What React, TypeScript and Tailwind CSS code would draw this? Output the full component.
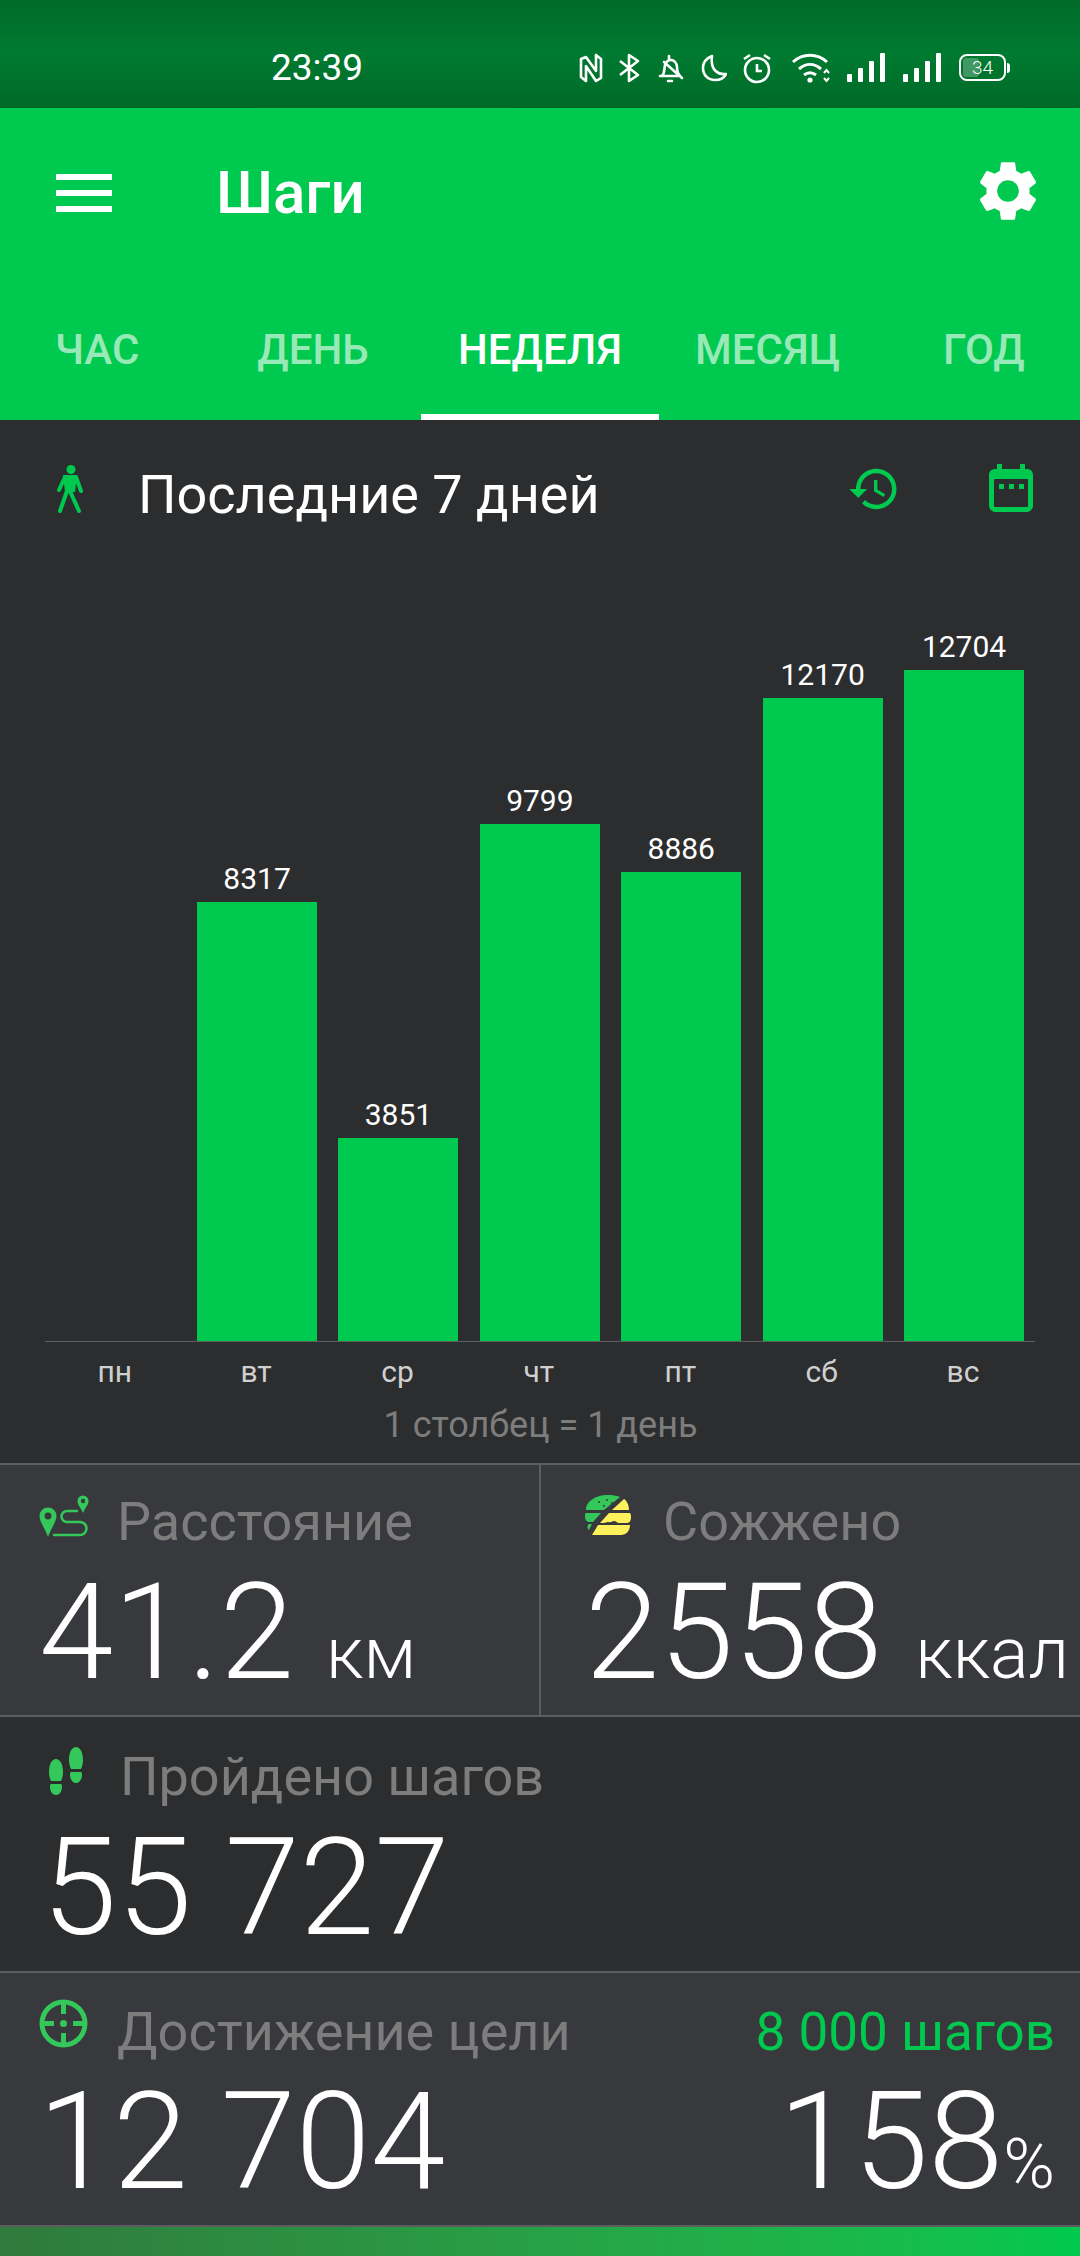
const days = [
  { day: "пн", steps: 0 },
  { day: "вт", steps: 8317 },
  { day: "ср", steps: 3851 },
  { day: "чт", steps: 9799 },
  { day: "пт", steps: 8886 },
  { day: "сб", steps: 12170 },
  { day: "вс", steps: 12704 },
];

const tabs = [
  { label: "ЧАС", className: "w-[205px] pl-[55px] text-left text-white/60" },
  { label: "ДЕНЬ", className: "w-[216px] text-center text-white/60" },
  { label: "НЕДЕЛЯ", className: "w-[238px] text-center text-white border-b-[6px] border-white" },
  { label: "МЕСЯЦ", className: "w-[217px] text-center text-white/60" },
  { label: "ГОД", className: "w-[204px] pl-[67px] text-left text-white/60" },
];

function StatusIcons() {
  return (
    <div className="flex items-center text-white">
      <svg width="24" height="30" viewBox="0 0 24 30" fill="none" stroke="currentColor" strokeWidth="2.6">
        <path d="M7 4 2 6v18l5 4V13l10 15 5-3V6l-5-4v16L7 4Z" strokeLinejoin="round" />
      </svg>
      <svg width="22" height="30" viewBox="0 0 22 30" fill="none" stroke="currentColor" strokeWidth="2.6" className="ml-[15px]">
        <path d="M2 8 20 22 11 28V2l9 6L2 22" strokeLinejoin="round" />
      </svg>
      <svg width="26" height="30" viewBox="0 0 26 30" fill="none" stroke="currentColor" strokeWidth="2.6" className="ml-[18px]">
        <path d="M2 23h18M4 23c3-3 2-7 3-11 1-3 3-5 6-5s6 3 6 7c0 3 0 6 3 9M11 3v3M10 28h4M6 9l18 16" strokeLinecap="round" />
      </svg>
      <svg width="26" height="28" viewBox="0 0 26 28" fill="none" stroke="currentColor" strokeWidth="2.6" className="ml-[17px]">
        <path d="M11 2C6 4 2 8 2 14c0 7 5 12 12 12 5 0 9-2 11-6-7 1-16-3-14-18Z" strokeLinejoin="round" />
      </svg>
      <svg width="30" height="32" viewBox="0 0 30 32" fill="none" stroke="currentColor" strokeWidth="2.6" className="ml-[15px]">
        <circle cx="15" cy="18" r="12" />
        <path d="M15 12v7h5M2 7l6-4M28 7l-6-4" />
      </svg>
      <svg width="40" height="30" viewBox="0 0 40 30" fill="none" stroke="currentColor" strokeWidth="3" className="ml-[20px]">
        <path d="M1 9c10-9 24-9 34 0M7 16c7-6 15-6 22 0M12 22c4-3 8-3 12 0" />
        <circle cx="18" cy="27" r="2.6" fill="currentColor" stroke="none" />
        <path d="M32 20l2.500-3 2.500 3M32 25l2.500 3 2.500-3" strokeWidth="2" />
      </svg>
      <svg width="38" height="30" viewBox="0 0 38 30" fill="currentColor" className="ml-[15px]">
        <rect x="0" y="21" width="5" height="8" rx="1" />
        <rect x="11" y="15" width="5" height="14" rx="1" />
        <rect x="22" y="8" width="5" height="21" rx="1" />
        <rect x="33" y="0" width="5" height="29" rx="1" />
      </svg>
      <svg width="38" height="30" viewBox="0 0 38 30" fill="currentColor" className="ml-[18px]">
        <rect x="0" y="21" width="5" height="8" rx="1" />
        <rect x="11" y="15" width="5" height="14" rx="1" />
        <rect x="22" y="8" width="5" height="21" rx="1" />
        <rect x="33" y="0" width="5" height="29" rx="1" />
      </svg>
      <div className="relative ml-[18px] flex h-[27px] w-[47px] items-center justify-center overflow-hidden rounded-[8px] border-2 border-white text-[19px] leading-none font-light">
        <div className="absolute inset-y-[2px] left-[2px] w-[16px] rounded-[3px] bg-white/25" />
        <span className="relative">34</span>
      </div>
      <div className="ml-[1px] h-[10px] w-[3px] rounded-r-full bg-white" />
    </div>
  );
}

function RouteIcon() {
  return (
    <svg width="50" height="42" viewBox="0 0 50 42" className="mr-[29px] mt-[3px] shrink-0">
      <path d="M.5 21a8.500 8.500 0 0 1 17 0c0 6-5 11-8.500 21C5.500 32 .5 27 .5 21Z" fill="#34c759" />
      <circle cx="9" cy="21" r="3.400" fill="#38393c" />
      <path d="M38 16H28a5.500 5.500 0 0 0 0 11H41a6.500 6.500 0 0 1 0 13H15" fill="none" stroke="#34c759" strokeWidth="2.600" strokeLinecap="round" />
      <path d="M38.500 6a5.500 5.500 0 0 1 11 0c0 4-3 6-5.500 12-2.500-6-5.500-8-5.500-12Z" fill="#34c759" />
      <circle cx="44" cy="6" r="2.200" fill="#38393c" />
    </svg>
  );
}

function BurgerIcon() {
  return (
    <svg width="46" height="40" viewBox="0 0 46 40" className="mr-[33px] mt-[3px] shrink-0">
      <path d="M1 15C1 6 11 0 23 0c4 0 8 .6 12 2L19 15H1ZM1 18h15l-8 9H5c-3 0-5-2-5-5s0-4 1-4ZM4 29h3l-3 6c-2-1-2-5 0-6Z" fill="#34c759" />
      <path d="M39 4c3 2 5 6 5 11H27L39 4ZM24 18h21c1 1 1 3 1 5 0 3-2 5-4 5H34c-2 0-3-2-5-2s-3 2-6 1c-3 1-5 1-8 1l9-10ZM13 30h32c0 6-4 10-9 10H7l6-10Z" fill="#fdf15c" />
      <circle cx="14" cy="7" r="1" fill="#38393c" />
      <circle cx="22" cy="5" r="1" fill="#38393c" />
      <circle cx="19" cy="11" r="1" fill="#38393c" />
      <circle cx="27" cy="8" r="1" fill="#38393c" />
    </svg>
  );
}

function FeetIcon() {
  return (
    <svg width="34" height="48" viewBox="0 0 34 48" fill="#34c759" className="mr-[37px] ml-[49px] shrink-0">
      <path d="M7 12c4 0 7 5 7 13 0 4-1 7-2 9H2c-1-2-2-5-2-9 0-8 3-13 7-13ZM2 37h10c1 0 1 2 1 3 0 5-3 8-6 8s-6-3-6-8c0-1 0-3 1-3Z" />
      <path d="M27 0c4 0 7 5 7 13 0 4-1 7-2 9H22c-1-2-2-5-2-9 0-8 3-13 7-13ZM22 25h10c1 0 1 2 1 3 0 5-3 8-6 8s-6-3-6-8c0-1 0-3 1-3Z" />
    </svg>
  );
}

function TargetIcon() {
  return (
    <svg width="49" height="49" viewBox="0 0 49 49" fill="none" stroke="#34c759" strokeWidth="5" className="mr-[29px] ml-[39px] -mt-[3px] shrink-0">
      <circle cx="24.500" cy="24.500" r="21.500" />
      <path d="M24.500 3v12M24.500 34v12M3 24.500h12M34 24.500h12" />
      <circle cx="24.500" cy="24.500" r="3.500" fill="#34c759" stroke="none" />
    </svg>
  );
}

export default function App() {
  return (
    <div className="flex h-[2256px] w-[1080px] flex-col overflow-hidden bg-[#2c2d2f] font-['Roboto',sans-serif] text-white">
      <div className="flex h-[108px] items-center bg-gradient-to-b from-[#006b2b] via-[#007a30] to-[#006a29] pl-[271px] pt-[27px]">
        <span className="w-[308px] text-[37px] leading-none">23:39</span>
        <StatusIcons />
      </div>

      <div className="bg-[#00c94f]">
        <div className="flex h-[180px] items-start justify-between pl-[56px] pr-[36px]">
          <div className="flex items-center pt-[52px]">
            <div className="flex h-[56px] w-[56px] flex-col justify-center gap-[10px]">
              <div className="h-[6px] bg-white" />
              <div className="h-[6px] bg-white" />
              <div className="h-[6px] bg-white" />
            </div>
            <h1 className="ml-[104px] text-[60px] leading-[66px] font-medium">Шаги</h1>
          </div>
          <svg width="72" height="72" viewBox="0 0 24 24" fill="white" className="mt-[47px]">
            <path d="M19.140 12.940c.04-.3.06-.61.06-.94 0-.32-.02-.64-.07-.94l2.030-1.580c.18-.14.23-.41.12-.61l-1.920-3.320c-.12-.22-.37-.29-.59-.22l-2.390.96c-.5-.38-1.030-.7-1.620-.94l-.36-2.540c-.04-.24-.24-.41-.48-.41h-3.840c-.24 0-.43.17-.47.41l-.36 2.540c-.59.24-1.130.57-1.620.94l-2.390-.96c-.22-.08-.47 0-.59.22L2.740 8.870c-.12.21-.08.47.12.61l2.030 1.580c-.05.3-.09.63-.09.94s.02.64.07.94l-2.030 1.580c-.18.14-.23.41-.12.61l1.920 3.320c.12.22.37.29.59.22l2.390-.96c.5.38 1.030.7 1.620.94l.36 2.540c.05.24.24.41.48.41h3.840c.24 0 .44-.17.47-.41l.36-2.540c.59-.24 1.130-.56 1.620-.94l2.390.96c.22.08.47 0 .59-.22l1.920-3.320c.12-.22.07-.47-.12-.61l-2.010-1.580zM12 15.600c-1.980 0-3.600-1.620-3.600-3.600s1.620-3.600 3.600-3.600 3.600 1.620 3.600 3.600-1.620 3.600-3.600 3.600z" />
          </svg>
        </div>
        <div className="flex h-[132px] text-[42px] font-medium">
          {tabs.map((tab) => (
            <div key={tab.label} className={`pt-[30px] leading-[64px] ${tab.className}`}>
              {tab.label}
            </div>
          ))}
        </div>
      </div>

      <div className="flex h-[150px] items-start pl-[57px] pt-[45px]">
        <svg width="26" height="48" viewBox="0 0 26 48" fill="#00c94f" stroke="#00c94f" strokeLinecap="round" className="shrink-0">
          <circle cx="14" cy="4.500" r="4.500" stroke="none" />
          <path d="M6 10h14l-2 17H8L6 10Z" stroke="none" />
          <path d="M8 12 2 25M19 12l5 14M10 26 3 46M12 24l10 22" fill="none" strokeWidth="4" />
        </svg>
        <h2 className="ml-[55px] text-[54px] leading-[60px] whitespace-nowrap">Последние 7 дней</h2>
        <svg width="54" height="54" viewBox="0 0 24 24" fill="#00c94f" className="ml-[247px] -mt-[3px] shrink-0">
          <path d="M13 3c-4.970 0-9 4.030-9 9H1l3.890 3.890.07.14L9 12H6c0-3.870 3.130-7 7-7s7 3.130 7 7-3.130 7-7 7c-1.930 0-3.680-.79-4.940-2.060l-1.420 1.420C8.270 19.990 10.510 21 13 21c4.970 0 9-4.030 9-9s-4.030-9-9-9zm-1 5v5l4.280 2.540.72-1.210-3.500-2.080V8H12z" />
        </svg>
        <svg width="44" height="48" viewBox="0 0 44 48" fill="#00c94f" className="ml-[88px] shrink-0 -mt-[1px]">
          <path d="M8 0h5v5h18V0h5v5h2c3 0 6 2 6 6v31c0 3-3 6-6 6H6c-3 0-6-3-6-6V11c0-4 3-6 6-6h2V0Z" />
          <rect x="5" y="15" width="34" height="28" rx="1" fill="#2c2d2f" />
          <rect x="10" y="20" width="5" height="5" />
          <rect x="20" y="20" width="5" height="5" />
          <rect x="30" y="20" width="5" height="5" />
        </svg>
      </div>

      <div className="mx-[45px] flex h-[772px] items-end border-b-[1px] border-[#5c5d60]">
        {days.map((d) => (
          <div key={d.day} className="flex w-[141.4px] flex-col items-center">
            {d.steps > 0 && <span className="pb-[5px] text-[30px] leading-[36px]">{d.steps}</span>}
            <div className="w-[120px] bg-[#00c94f]" style={{ height: d.steps * 0.0528 }} />
          </div>
        ))}
      </div>
      <div className="mx-[44px] flex pt-[12px]">
        {days.map((d) => (
          <div key={d.day} className="w-[141.4px] text-center text-[30px] leading-[36px] text-[#d0d0d0]">
            {d.day}
          </div>
        ))}
      </div>
      <div className="pt-[15px] pl-[1px] text-center text-[36px] leading-[40px] text-[#7d7d7d]">1 столбец = 1 день</div>

      <div className="mt-[18px] flex h-[254px] shrink-0 border-y-2 border-[#5c5d60] bg-[#38393c]">
        <div className="w-[541px] border-r-2 border-[#5c5d60] pt-[27px]">
          <div className="flex items-start pl-[39px]">
            <RouteIcon />
            <span className="-ml-[1px] text-[54px] leading-[60px] text-[#7d7d7d]">Расстояние</span>
          </div>
          <div className="mt-[11px] flex items-baseline pl-[39px] leading-[140px] font-light">
            <span className="text-[134px]">41.2</span>
            <span className="ml-[32px] text-[72px]">км</span>
          </div>
        </div>
        <div className="flex-1 pt-[27px]">
          <div className="flex items-start pl-[44px]">
            <BurgerIcon />
            <span className="-ml-[1px] text-[54px] leading-[60px] text-[#7d7d7d]">Сожжено</span>
          </div>
          <div className="mt-[11px] flex items-baseline pl-[44px] leading-[140px] font-light whitespace-nowrap">
            <span className="text-[134px]">2558</span>
            <span className="ml-[33px] text-[72px]">ккал</span>
          </div>
        </div>
      </div>

      <div className="h-[254px] shrink-0 pt-[30px]">
        <div className="flex items-start">
          <FeetIcon />
          <span className="text-[54px] leading-[60px] text-[#7d7d7d]">Пройдено шагов</span>
        </div>
        <div className="mt-[11px] pl-[42px] text-[135px] leading-[140px] font-light">55 727</div>
      </div>

      <div className="h-[256px] shrink-0 border-y-2 border-[#5c5d60] bg-[#38393c] pt-[29px]">
        <div className="flex items-start pr-[25px]">
          <TargetIcon />
          <span className="text-[54px] leading-[60px] text-[#7d7d7d]">Достижение цели</span>
          <span className="ml-auto text-[53px] leading-[60px] text-[#00c94f]">8 000 шагов</span>
        </div>
        <div className="mt-[10px] flex items-baseline justify-between pl-[38px] pr-[25px] leading-[140px] font-light">
          <span className="text-[135px]">12 704</span>
          <span className="text-[135px]">
            158<span className="text-[70px]">%</span>
          </span>
        </div>
      </div>

      <div className="flex-1 bg-gradient-to-r from-[#2f7a3c] to-[#00c94f]" />
    </div>
  );
}
